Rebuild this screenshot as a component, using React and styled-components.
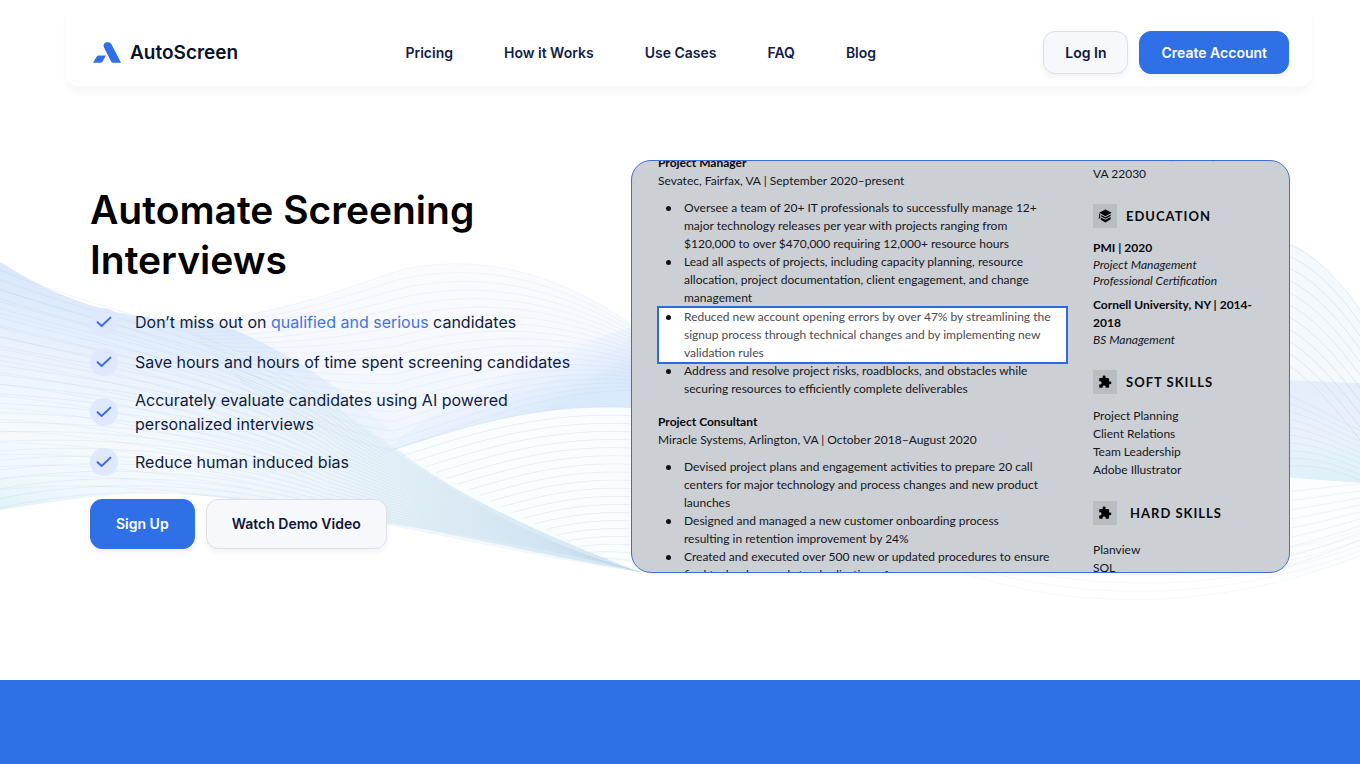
import React from "react";
import styled, { createGlobalStyle } from "styled-components";
import { MdExtension } from "react-icons/md";

const GlobalStyle = createGlobalStyle`
  *, *::before, *::after { box-sizing: border-box; }
  body {
    margin: 0;
    background: #ffffff;
    font-family: Inter, "Liberation Sans", sans-serif;
    color: #121c3d;
  }
  h1, h2, h3, p, ul { margin: 0; padding: 0; }
  ul { list-style: none; }
`;

const Page = styled.div`
  display: flex;
  flex-direction: column;
  min-height: 100vh;
`;

const Top = styled.div`
  position: relative;
  overflow: hidden;
`;

const Backdrop = styled.svg`
  position: absolute;
  inset: 0;
  width: 100%;
  height: 100%;
  z-index: 0;
`;

const NavBar = styled.header`
  position: relative;
  display: flex;
  align-items: center;
  justify-content: space-between;
  margin: 0 48px 0 66px;
  padding: 31px 23px 12px 27px;
  border-radius: 12px;
  background: #ffffff;
  box-shadow: 0 8px 8px -1px rgba(20, 20, 40, 0.035);
`;

const Brand = styled.a`
  display: flex;
  align-items: center;
  gap: 9px;
  font-size: 19px;
  font-weight: 600;
  line-height: 24px;
  color: #0b1126;
  text-decoration: none;
`;

const NavLinks = styled.nav`
  display: flex;
  gap: 51px;
`;

const NavLink = styled.a`
  font-size: 14px;
  font-weight: 600;
  line-height: 20px;
  color: #121c46;
  text-decoration: none;
`;

const Actions = styled.div`
  display: flex;
  align-items: center;
  gap: 11px;
`;

const Button = styled.button`
  height: ${(p) => (p.$large ? 50 : 43)}px;
  padding: 0 ${(p) => (p.$large ? 25 : 21)}px;
  border: 1px solid ${(p) => (p.$primary ? "#2f70e7" : "#dcdfea")};
  border-radius: 12px;
  background: ${(p) => (p.$primary ? "#2f70e7" : "#f7f8fc")};
  color: ${(p) => (p.$primary ? "#ffffff" : "#0f1738")};
  font: 600 14px/20px Inter, "Liberation Sans", sans-serif;
  box-shadow: 0 4px 6px rgba(20, 20, 50, 0.05);
  cursor: pointer;
`;

const Hero = styled.main`
  position: relative;
  display: grid;
  grid-template-columns: 500fr 659fr;
  column-gap: 41px;
  align-items: center;
  padding: 74px 70px 107px 90px;
`;

const Title = styled.h1`
  font-size: 39px;
  font-weight: 600;
  line-height: 50px;
  color: #000000;
`;

const Benefits = styled.ul`
  display: flex;
  flex-direction: column;
  gap: 12px;
  margin: 23px 0;
`;

const Benefit = styled.li`
  display: flex;
  align-items: center;
  gap: 17px;
  font-size: 16px;
  line-height: 24px;
`;

const Tick = styled.span`
  display: flex;
  align-items: center;
  justify-content: center;
  flex: none;
  width: 28px;
  height: 28px;
  border-radius: 50%;
  background: #dfe8fc;
`;

const Accent = styled.span`
  color: #4474e0;
`;

const Resume = styled.article`
  display: grid;
  grid-template-columns: 410fr 170fr;
  column-gap: 25px;
  height: 413px;
  padding: 0 26px;
  overflow: hidden;
  border: 1px solid #3f6ed2;
  border-radius: 20px;
  background: #cccfd4;
  color: #15171c;
  font-family: Lato, "Open Sans", sans-serif;
  font-size: 12px;
  line-height: 18px;
  white-space: nowrap;
`;

const Jobs = styled.div`
  display: flex;
  flex-direction: column;
  gap: 15px;
  margin-top: -7px;
`;

const Strong = styled.h3`
  font-size: 12px;
  font-weight: 700;
  line-height: 18px;
  color: #08090c;
`;

const Duties = styled.ul`
  margin-top: 9px;
`;

const Duty = styled.li`
  position: relative;
  padding-left: 26px;
  ${(p) =>
    p.$marked &&
    `
    margin: -1px 0 -2px -1px;
    padding-left: 25px;
    border: 2px solid #2f6adb;
    background: #ffffff;
    color: #4a4b50;
  `}

  &::before {
    content: "";
    position: absolute;
    left: ${(p) => (p.$marked ? 7 : 8)}px;
    top: 7px;
    width: 5px;
    height: 5px;
    border-radius: 50%;
    background: #101218;
  }
`;

const Side = styled.div`
  margin-top: -14px;
`;

const SideHead = styled.div`
  display: flex;
  align-items: center;
  gap: ${(p) => p.$gap || 9}px;
  margin: ${(p) => p.$before}px 0 ${(p) => p.$after}px;
`;

const SideTitle = styled.h2`
  font-size: 13px;
  font-weight: 700;
  line-height: 18px;
  letter-spacing: 1px;
  color: #0a0b0f;
`;

const Glyph = styled.span`
  display: flex;
  align-items: center;
  justify-content: center;
  width: 24px;
  height: 24px;
  background: #b9bcc1;
  color: #000000;
`;

const Note = styled.p`
  font-style: italic;
  line-height: 16px;
  margin-bottom: ${(p) => (p.$last ? 0 : 7)}px;
`;

const Band = styled.footer`
  flex: 1;
  min-height: 84px;
  background: #2f70e7;
`;

/* Each curve is a list of cubic control points; a mesh is the blend of two curves. */
const mix = (a, b, t) => a.map((v, i) => v + (b[i] - v) * t);

const curve = (c) =>
  `M${c[0]} ${c[1]}` +
  Array.from({ length: (c.length - 2) / 6 }, (_, i) => `C${c.slice(2 + i * 6, 8 + i * 6).join(" ")}`).join("");

function Mesh({ from, to, count, stroke, opacity }) {
  return (
    <g fill="none" stroke={stroke} strokeOpacity={opacity}>
      {Array.from({ length: count }, (_, i) => (
        <path key={i} d={curve(mix(from, to, i / (count - 1)))} />
      ))}
    </g>
  );
}

function Waves() {
  return (
    <Backdrop viewBox="0 0 1360 680" preserveAspectRatio="none" aria-hidden="true">
      <defs>
        <linearGradient id="left" x1="40" y1="282" x2="0" y2="510" gradientUnits="userSpaceOnUse">
          <stop offset="0" stopColor="#dae8fb" />
          <stop offset="0.3" stopColor="#e9f2fd" />
          <stop offset="0.65" stopColor="#f5fafe" />
          <stop offset="0.85" stopColor="#eff8fc" />
          <stop offset="1" stopColor="#e0f1f7" />
        </linearGradient>
        <linearGradient id="lilac" x1="0" y1="262" x2="0" y2="450" gradientUnits="userSpaceOnUse">
          <stop offset="0" stopColor="#fbfbff" />
          <stop offset="1" stopColor="#eff5fe" />
        </linearGradient>
        <linearGradient id="blue" x1="500" y1="365" x2="528" y2="422" gradientUnits="userSpaceOnUse">
          <stop offset="0" stopColor="#e4effd" stopOpacity="0" />
          <stop offset="1" stopColor="#d9e8fb" />
        </linearGradient>
        <linearGradient id="tail" x1="180" y1="0" x2="640" y2="0" gradientUnits="userSpaceOnUse">
          <stop offset="0" stopColor="#e4f1f9" stopOpacity="0" />
          <stop offset="0.6" stopColor="#e0edf6" />
          <stop offset="1" stopColor="#d3e5f3" />
        </linearGradient>
        <linearGradient id="meshFade" x1="0" y1="0" x2="640" y2="0" gradientUnits="userSpaceOnUse">
          <stop offset="0" stopColor="#a5c4d8" />
          <stop offset="0.6" stopColor="#a5c4d8" />
          <stop offset="1" stopColor="#a5c4e0" stopOpacity="0.15" />
        </linearGradient>
        <linearGradient id="right" x1="0" y1="380" x2="0" y2="484" gradientUnits="userSpaceOnUse">
          <stop offset="0" stopColor="#e4edfb" />
          <stop offset="0.6" stopColor="#e9f2fc" />
          <stop offset="1" stopColor="#def0f8" />
        </linearGradient>
      </defs>
      <path
        d="M180 322C270 318 340 290 400 270C490 250 570 280 640 330V570C520 560 340 505 180 494Z"
        fill="url(#lilac)"
      />
      <path
        d="M0 262C60 300 120 322 210 321C300 350 380 420 450 480C500 510 560 545 640 572C480 552 330 496 170 493C110 493 60 500 0 510Z"
        fill="url(#left)"
      />
      <path d="M380 455C440 400 540 350 640 325V410C560 404 480 425 380 455Z" fill="url(#blue)" />
      <path d="M392 450C470 425 540 402 640 408V572C540 540 470 500 392 450Z" fill="#fafdff" />
      <path d="M180 330C290 360 390 450 450 485C500 515 570 545 640 572C500 548 340 505 180 494Z" fill="url(#tail)" />
      <Mesh
        from={[180, 324, 270, 318, 340, 290, 400, 270, 490, 250, 570, 280, 640, 330]}
        to={[240, 380, 280, 410, 340, 440, 392, 450, 470, 425, 540, 390, 640, 390]}
        count={20}
        stroke="#b9c6e6"
        opacity="0.16"
      />
      <Mesh
        from={[0, 270, 120, 320, 260, 335, 350, 420, 440, 490, 540, 545, 640, 572]}
        to={[0, 508, 120, 480, 240, 496, 320, 512, 440, 530, 560, 550, 640, 572]}
        count={26}
        stroke="url(#meshFade)"
        opacity="0.18"
      />
      <Mesh
        from={[0, 290, 100, 320, 220, 350, 340, 420]}
        to={[0, 490, 80, 480, 160, 490, 240, 498]}
        count={18}
        stroke="#aebfdc"
        opacity="0.14"
      />
      <Mesh
        from={[392, 450, 470, 425, 540, 402, 640, 408]}
        to={[600, 558, 610, 558, 625, 560, 640, 562]}
        count={20}
        stroke="#b7d0df"
        opacity="0.3"
      />
      <path d="M1280 240C1310 248 1340 280 1360 310V384H1280Z" fill="#f4f9fe" />
      <path d="M1280 380L1360 383V483L1280 477Z" fill="url(#right)" />
      <path d="M1280 478L1360 483V560L1280 580Z" fill="#fbfdff" />
      <Mesh
        from={[1280, 241, 1310, 249, 1340, 280, 1360, 310]}
        to={[1280, 360, 1300, 372, 1320, 388, 1360, 440]}
        count={11}
        stroke="#a9bfcb"
        opacity="0.28"
      />
      <Mesh
        from={[1280, 392, 1310, 402, 1335, 420, 1360, 430]}
        to={[1280, 468, 1310, 462, 1335, 470, 1360, 480]}
        count={10}
        stroke="#a9c6e2"
        opacity="0.2"
      />
      <Mesh
        from={[1280, 492, 1310, 490, 1335, 486, 1360, 484]}
        to={[1280, 568, 1310, 560, 1335, 550, 1360, 540]}
        count={9}
        stroke="#b8d3e6"
        opacity="0.22"
      />
      <Mesh
        from={[1000, 545, 1100, 560, 1240, 570, 1360, 530]}
        to={[960, 572, 1080, 612, 1220, 610, 1360, 556]}
        count={6}
        stroke="#b8d3e6"
        opacity="0.14"
      />
    </Backdrop>
  );
}

function Logo() {
  return (
    <svg width="28" height="21" viewBox="0 0 28 21" aria-hidden="true">
      <path d="M11 5.4C9.8 2.4 11.6 0.2 14 0.2H15.6Q17.4 0.2 18.2 1.8L28 20.8H20.2Q18.8 20.8 18.1 19.5Z" fill="#2f6fe8" />
      <path d="M3.6 14.8Q4.4 13.4 6 13.4H13L9.6 19.4Q8.8 20.8 7.2 20.8H0Z" fill="#2f6fe8" />
    </svg>
  );
}

function GradCap() {
  return (
    <svg width="14" height="14" viewBox="0 0 14 14" fill="currentColor" aria-hidden="true">
      <path d="M7.4 0.4L13.6 3.8L7.4 7.2L1.2 3.8Z" />
      <path d="M1.2 4.6L2.2 5.1V8.4L1.6 9.6H0.2L1.2 8.2Z" />
      <path d="M3.2 6L7.4 8.3L12.6 5.5V7L7.4 9.8L3.2 7.6Z" />
      <path d="M2.8 8.4L7.4 10.8L12.6 8V10.2L7.4 13.4L2.8 10.8Z" />
    </svg>
  );
}

function TickMark() {
  return (
    <Tick>
      <svg width="16" height="12" viewBox="0 0 16 12" aria-hidden="true">
        <path
          d="M1.6 6.2L5.6 10L14.4 1.6"
          fill="none"
          stroke="#3f6be0"
          strokeWidth="2"
          strokeLinecap="round"
          strokeLinejoin="round"
        />
      </svg>
    </Tick>
  );
}

const links = ["Pricing", "How it Works", "Use Cases", "FAQ", "Blog"];

const benefits = [
  <>
    Don’t miss out on <Accent>qualified and serious</Accent> candidates
  </>,
  "Save hours and hours of time spent screening candidates",
  "Accurately evaluate candidates using AI powered personalized interviews",
  "Reduce human induced bias",
];

const jobs = [
  {
    role: "Project Manager",
    place: "Sevatec, Fairfax, VA | September 2020–present",
    duties: [
      [
        "Oversee a team of 20+ IT professionals to successfully manage 12+",
        "major technology releases per year with projects ranging from",
        "$120,000 to over $470,000 requiring 12,000+ resource hours",
      ],
      [
        "Lead all aspects of projects, including capacity planning, resource",
        "allocation, project documentation, client engagement, and change",
        "management",
      ],
      [
        "Reduced new account opening errors by over 47% by streamlining the",
        "signup process through technical changes and by implementing new",
        "validation rules",
      ],
      [
        "Address and resolve project risks, roadblocks, and obstacles while",
        "securing resources to efficiently complete deliverables",
      ],
    ],
    marked: 2,
  },
  {
    role: "Project Consultant",
    place: "Miracle Systems, Arlington, VA | October 2018–August 2020",
    duties: [
      [
        "Devised project plans and engagement activities to prepare 20 call",
        "centers for major technology and process changes and new product",
        "launches",
      ],
      ["Designed and managed a new customer onboarding process", "resulting in retention improvement by 24%"],
      ["Created and executed over 500 new or updated procedures to ensure", "final technology and standardization of"],
    ],
  },
];

const Lines = ({ items }) =>
  items.map((line, i) => (
    <React.Fragment key={line}>
      {i > 0 && <br />}
      {line}
    </React.Fragment>
  ));

export default function App() {
  return (
    <>
      <GlobalStyle />
      <Page>
        <Top>
          <Waves />
          <NavBar>
            <Brand href="#">
              <Logo />
              AutoScreen
            </Brand>
            <NavLinks>
              {links.map((l) => (
                <NavLink key={l} href="#">
                  {l}
                </NavLink>
              ))}
            </NavLinks>
            <Actions>
              <Button>Log In</Button>
              <Button $primary>Create Account</Button>
            </Actions>
          </NavBar>
          <Hero>
            <section>
              <Title>
                Automate Screening
                <br />
                Interviews
              </Title>
              <Benefits>
                {benefits.map((b, i) => (
                  <Benefit key={i}>
                    <TickMark />
                    <span>{b}</span>
                  </Benefit>
                ))}
              </Benefits>
              <Actions>
                <Button $primary $large>
                  Sign Up
                </Button>
                <Button $large>Watch Demo Video</Button>
              </Actions>
            </section>
            <Resume>
              <Jobs>
                {jobs.map((job) => (
                  <section key={job.role}>
                    <Strong>{job.role}</Strong>
                    <p>{job.place}</p>
                    <Duties>
                      {job.duties.map((d, i) => (
                        <Duty key={i} $marked={i === job.marked}>
                          <Lines items={d} />
                        </Duty>
                      ))}
                    </Duties>
                  </section>
                ))}
              </Jobs>
              <Side>
                <p>10 Main Street, Fairfax,</p>
                <p>VA 22030</p>
                <SideHead $before={21} $after={11}>
                  <Glyph>
                    <GradCap />
                  </Glyph>
                  <SideTitle>EDUCATION</SideTitle>
                </SideHead>
                <Strong>PMI | 2020</Strong>
                <Note>
                  <Lines items={["Project Management", "Professional Certification"]} />
                </Note>
                <Strong>
                  <Lines items={["Cornell University, NY | 2014-", "2018"]} />
                </Strong>
                <Note $last>BS Management</Note>
                <SideHead $before={22} $after={13}>
                  <Glyph>
                    <MdExtension size={14} />
                  </Glyph>
                  <SideTitle>SOFT SKILLS</SideTitle>
                </SideHead>
                <p>
                  <Lines items={["Project Planning", "Client Relations", "Team Leadership", "Adobe Illustrator"]} />
                </p>
                <SideHead $before={22} $after={16} $gap={13}>
                  <Glyph>
                    <MdExtension size={14} />
                  </Glyph>
                  <SideTitle>HARD SKILLS</SideTitle>
                </SideHead>
                <p>
                  <Lines items={["Planview", "SQL"]} />
                </p>
              </Side>
            </Resume>
          </Hero>
        </Top>
        <Band />
      </Page>
    </>
  );
}
